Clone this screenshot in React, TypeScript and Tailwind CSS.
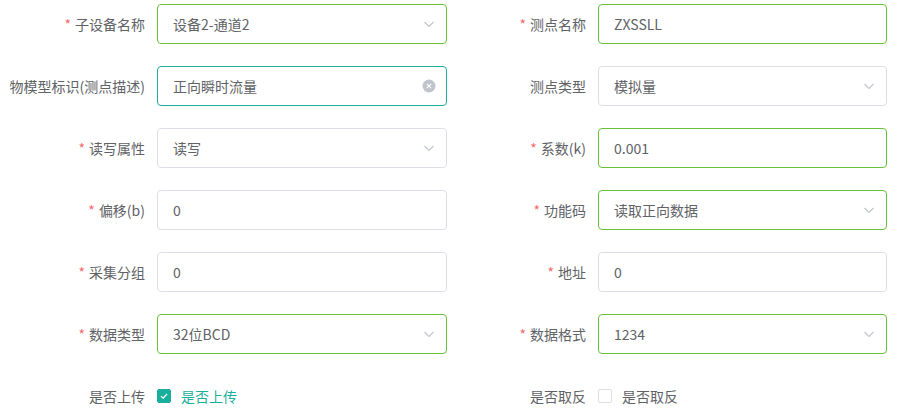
import React from "react";

const Chevron = () => (
  <svg width="14" height="14" viewBox="0 0 14 14" className="shrink-0">
    <path d="M2.5 5 L7 9.5 L11.5 5" fill="none" stroke="#c0c4cc" strokeWidth="1.1" />
  </svg>
);

const ClearIcon = () => (
  <svg width="14" height="14" viewBox="0 0 14 14" className="shrink-0">
    <circle cx="7" cy="7" r="6.5" fill="#c0c4cc" />
    <path d="M4.8 4.8 L9.2 9.2 M9.2 4.8 L4.8 9.2" stroke="#fff" strokeWidth="1.2" />
  </svg>
);

type Field = {
  label: string;
  required?: boolean;
  value: string;
  kind: "select" | "input" | "clear";
  border: "green" | "gray" | "teal";
};

const borderCls = {
  green: "border-[#67c23a]",
  gray: "border-[#dcdfe6]",
  teal: "border-[#1aaf9c]",
};

function Label({ text, required, w }: { text: string; required?: boolean; w: string }) {
  return (
    <div className={`${w} shrink-0 flex justify-end items-center pr-3 text-[14px] text-[#606266]`}>
      {required && <span className="text-[#f56c6c] mr-[4px]">*</span>}
      <span>{text}</span>
    </div>
  );
}

function Control({ f, w }: { f: Field; w: string }) {
  return (
    <div
      className={`${w} h-10 shrink-0 rounded-[4px] border ${borderCls[f.border]} bg-white flex items-center pl-[15px] pr-[10px] text-[14px] text-[#606266]`}
    >
      <span className="flex-1">{f.value}</span>
      {f.kind === "select" && <Chevron />}
      {f.kind === "clear" && <ClearIcon />}
    </div>
  );
}

const left: Field[] = [
  { label: "子设备名称", required: true, value: "设备2-通道2", kind: "select", border: "green" },
  { label: "物模型标识(测点描述)", value: "正向瞬时流量", kind: "clear", border: "teal" },
  { label: "读写属性", required: true, value: "读写", kind: "select", border: "gray" },
  { label: "偏移(b)", required: true, value: "0", kind: "input", border: "gray" },
  { label: "采集分组", required: true, value: "0", kind: "input", border: "gray" },
  { label: "数据类型", required: true, value: "32位BCD", kind: "select", border: "green" },
];

const right: Field[] = [
  { label: "测点名称", required: true, value: "ZXSSLL", kind: "input", border: "green" },
  { label: "测点类型", value: "模拟量", kind: "select", border: "gray" },
  { label: "系数(k)", required: true, value: "0.001", kind: "input", border: "green" },
  { label: "功能码", required: true, value: "读取正向数据", kind: "select", border: "green" },
  { label: "地址", required: true, value: "0", kind: "input", border: "gray" },
  { label: "数据格式", required: true, value: "1234", kind: "select", border: "green" },
];

export default function App() {
  return (
    <div
      className="w-[900px] h-[414px] bg-white overflow-hidden pt-[4px]"
      style={{ fontFamily: '"Noto Sans CJK SC", "Liberation Sans", sans-serif' }}
    >
      <div className="flex flex-col gap-[22px]">
        {left.map((l, i) => {
          const r = right[i];
          return (
            <div key={i} className="flex h-10">
              <Label text={l.label} required={l.required} w="w-[157px]" />
              <Control f={l} w="w-[290px]" />
              <Label text={r.label} required={r.required} w="w-[151px]" />
              <Control f={r} w="w-[289px]" />
            </div>
          );
        })}
        <div className="flex h-10 text-[14px]">
          <Label text="是否上传" w="w-[157px]" />
          <div className="w-[290px] flex items-center">
            <span className="w-[14px] h-[14px] rounded-[2px] bg-[#1aaf9c] border border-[#1aaf9c] flex items-center justify-center">
              <svg width="10" height="10" viewBox="0 0 10 10">
                <path d="M2 5.2 L4.2 7.2 L8 3" fill="none" stroke="#fff" strokeWidth="1.3" />
              </svg>
            </span>
            <span className="ml-[10px] text-[#1aaf9c]">是否上传</span>
          </div>
          <Label text="是否取反" w="w-[151px]" />
          <div className="w-[289px] flex items-center">
            <span className="w-[14px] h-[14px] rounded-[2px] bg-white border border-[#dcdfe6]" />
            <span className="ml-[10px] text-[#606266]">是否取反</span>
          </div>
        </div>
      </div>
    </div>
  );
}
